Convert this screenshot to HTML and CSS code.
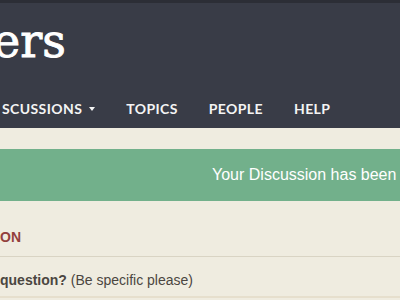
FILE: index.html
```html
<!DOCTYPE html>
<html>
<head>
<meta charset="utf-8">
<link rel="stylesheet" href="styles.css">
</head>
<body>
<div class="topbar"></div>
<header class="header">
  <div class="brand">ers</div>
  <nav class="nav">
    <a class="nav-item">SCUSSIONS <span class="caret"></span></a>
    <a class="nav-item">TOPICS</a>
    <a class="nav-item">PEOPLE</a>
    <a class="nav-item">HELP</a>
  </nav>
</header>
<div class="gap"></div>
<div class="flash">Your Discussion has been</div>
<main class="content">
  <h2 class="section-title">ON</h2>
  <div class="field-label"><b>question?</b> (Be specific please)</div>
  <div class="field-input"></div>
</main>
</body>
</html>
```
FILE: styles.css
```css
html, body {
  margin: 0;
  padding: 0;
}
body {
  width: 400px;
  height: 300px;
  overflow: hidden;
  background: #efece0;
  font-family: "Liberation Sans", Arial, sans-serif;
}
.topbar {
  height: 3px;
  background: #2c2e36;
}
.header {
  height: 125px;
  background: #393c47;
  box-sizing: border-box;
  padding-top: 15px;
}
.brand {
  font-family: "DejaVu Serif", serif;
  font-size: 46px;
  line-height: 46px;
  color: #ffffff;
  -webkit-text-stroke: 0.9px #ffffff;
  margin-left: -7px;
  white-space: nowrap;
}
.nav {
  display: flex;
  align-items: center;
  gap: 31px;
  margin-top: 37px;
  padding-left: 2px;
  white-space: nowrap;
}
.nav-item {
  font-family: Lato, "DejaVu Sans", sans-serif;
  font-weight: 700;
  font-size: 14px;
  line-height: 16px;
  letter-spacing: 0.4px;
  color: #f4f4f4;
  display: flex;
  align-items: center;
}
.caret {
  display: inline-block;
  width: 0;
  height: 0;
  margin-left: 7px;
  border-left: 3px solid transparent;
  border-right: 3px solid transparent;
  border-top: 4px solid #f4f4f4;
}
.gap {
  height: 21px;
}
.flash {
  height: 52px;
  background: #72b08b;
  color: #ffffff;
  font-size: 16px;
  line-height: 52px;
  padding-left: 212px;
  white-space: nowrap;
}
.content {
  padding-top: 27px;
}
.section-title {
  margin: 0;
  font-size: 14px;
  font-weight: 700;
  line-height: 18px;
  color: #93403d;
  padding-bottom: 10px;
  border-bottom: 1px solid #d9d4c4;
}
.field-label {
  font-size: 14px;
  line-height: 18px;
  color: #4b4640;
  margin-top: 14px;
  white-space: nowrap;
}
.field-input {
  margin-top: 7px;
  height: 10px;
  border-top: 2px solid #e6dfcd;
}
```
